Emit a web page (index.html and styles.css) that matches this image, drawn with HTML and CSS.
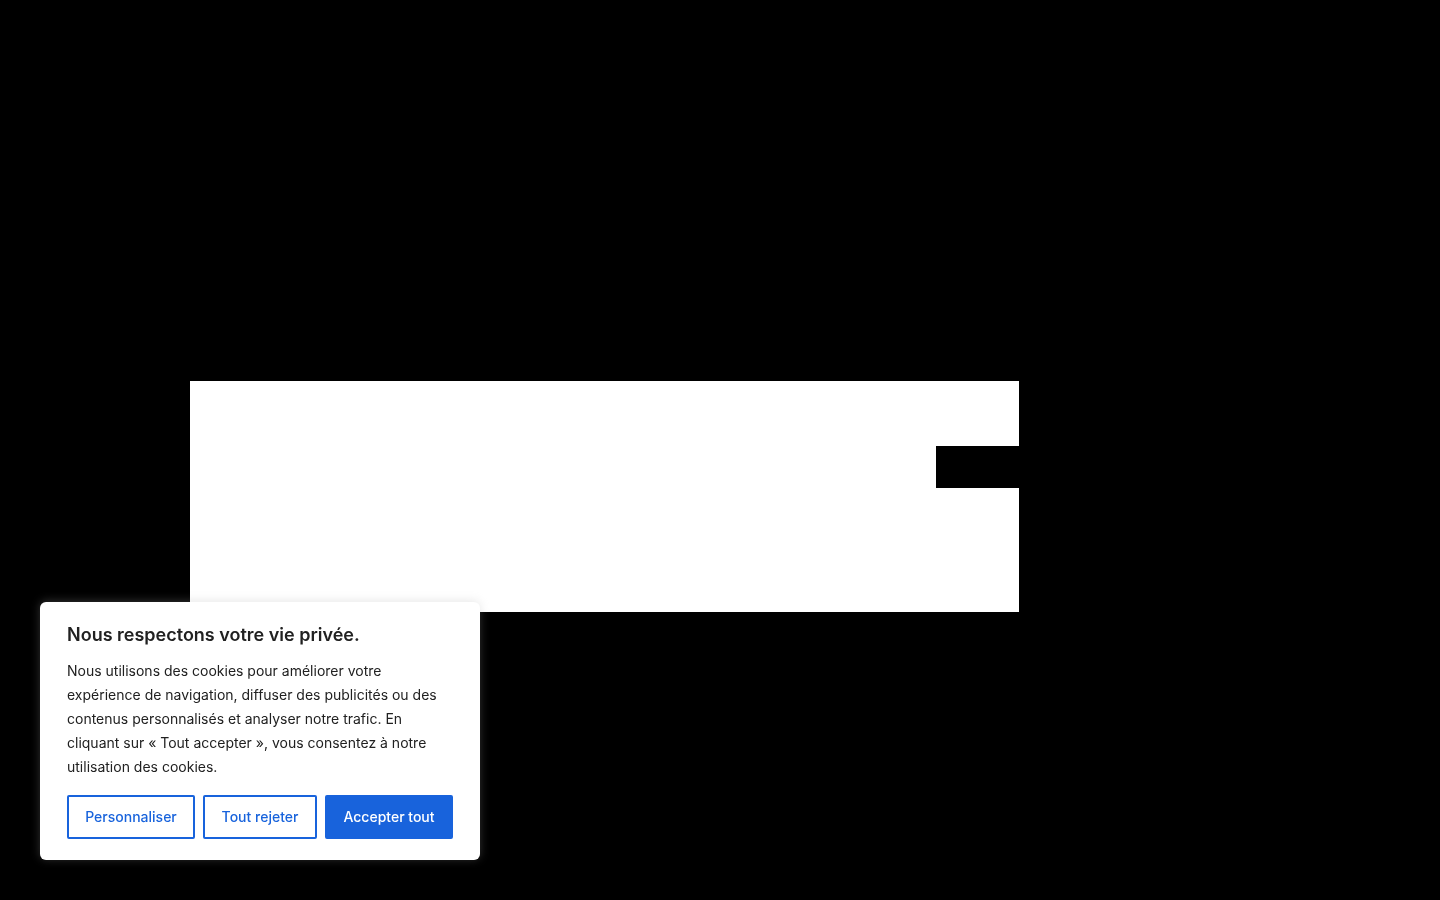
FILE: index.html
```html
<!DOCTYPE html>
<html lang="fr">
<head>
<meta charset="utf-8">
<title>Cookies</title>
<link rel="stylesheet" href="styles.css">
</head>
<body>
<div class="stage">
  <div class="frame">
    <div class="notch-row"><div class="notch"></div></div>
  </div>
</div>
<div class="cookie">
  <p class="cookie-title">Nous respectons votre vie privée.</p>
  <p class="cookie-text">Nous utilisons des cookies pour améliorer votre expérience de navigation, diffuser des publicités ou des contenus personnalisés et analyser notre trafic. En cliquant sur « Tout accepter », vous consentez à notre utilisation des cookies.</p>
  <div class="cookie-actions">
    <button class="btn btn-outline btn-custom">Personnaliser</button>
    <button class="btn btn-outline btn-reject">Tout rejeter</button>
    <button class="btn btn-solid">Accepter tout</button>
  </div>
</div>
</body>
</html>
```
FILE: styles.css
```css
html, body {
  margin: 0;
  padding: 0;
  background: #000;
  height: 100%;
  overflow: hidden;
  font-family: Inter, "Noto Sans", sans-serif;
}
.stage {
  padding-top: 381px;
  padding-left: 190px;
}
.frame {
  width: 829px;
  height: 231px;
  background: #fff;
  padding-top: 65px;
  box-sizing: border-box;
}
.notch-row {
  display: flex;
  justify-content: flex-end;
}
.notch {
  width: 83px;
  height: 42px;
  background: #000;
}
.cookie {
  position: fixed;
  left: 40px;
  bottom: 40px;
  width: 440px;
  box-sizing: border-box;
  padding: 21px 27px 21px;
  background: #fff;
  border-radius: 6px;
  box-shadow: 0 -1px 10px rgba(172, 171, 171, 0.3);
}
.cookie-title {
  margin: 0;
  font-size: 18px;
  line-height: 24px;
  font-weight: 600;
  color: #212121;
}
.cookie-text {
  margin: 12px 0 0;
  font-size: 14px;
  line-height: 24px;
  color: #212121;
}
.cookie-actions {
  display: flex;
  gap: 8px;
  margin-top: 16px;
}
.btn {
  height: 44px;
  box-sizing: border-box;
  border: 2px solid #1863dc;
  border-radius: 2px;
  font-family: Inter, "Noto Sans", sans-serif;
  font-size: 14px;
  font-weight: 500;
  padding: 0 0 2px;
  cursor: pointer;
}
.btn-outline {
  background: #fff;
  color: #1863dc;
}
.btn-custom { width: 128px; }
.btn-reject { width: 114px; }
.btn-solid {
  width: 128px;
  background: #1863dc;
  color: #fff;
}
```
